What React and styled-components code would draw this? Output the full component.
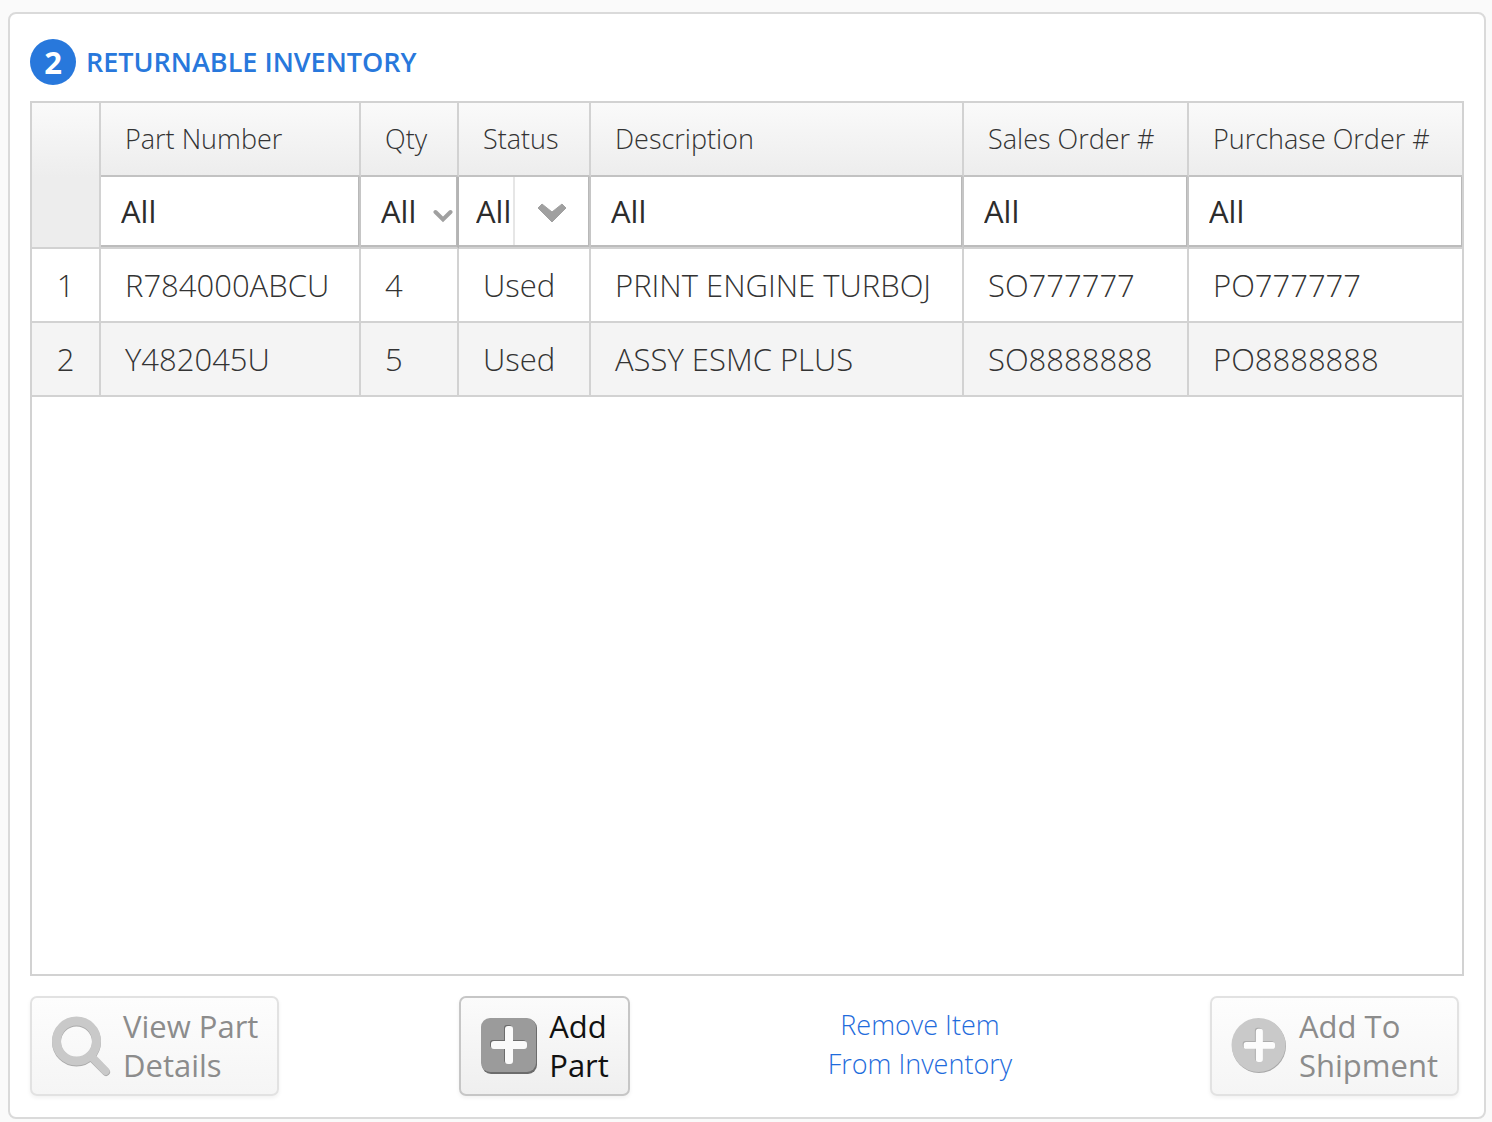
import React from "react";
import styled, { createGlobalStyle, css } from "styled-components";

const line = "#d2d2d2";
const blue = "#2878dc";

const GlobalStyle = createGlobalStyle`
  *, *::before, *::after { box-sizing: border-box; }
  body {
    margin: 0;
    background: #fafafa;
    color: #333;
    font-family: "Open Sans", "Noto Sans", sans-serif;
  }
  button, input, select { font: inherit; color: inherit; }
`;

const Page = styled.main`
  display: flex;
  flex-direction: column;
  min-height: 100vh;
  padding: 12px 6px 3px 8px;
`;

const Panel = styled.section`
  display: flex;
  flex: 1;
  flex-direction: column;
  padding: 25px 20px 21px;
  background: #fff;
  border: 2px solid #dadada;
  border-radius: 8px;
`;

const Heading = styled.header`
  display: flex;
  align-items: center;
  gap: 10px;
  margin-bottom: 16px;
`;

const StepBadge = styled.span`
  display: flex;
  align-items: center;
  justify-content: center;
  width: 46px;
  height: 46px;
  border-radius: 50%;
  background: ${blue};
  color: #fff;
  font-size: 31px;
  font-weight: 700;
  line-height: 46px;
`;

const Title = styled.h2`
  margin: 0;
  color: ${blue};
  font-size: 27px;
  font-weight: 600;
  line-height: 40px;
`;

const GridFrame = styled.div`
  flex: 1;
  border: 2px solid ${line};
`;

const Table = styled.table`
  width: 100%;
  table-layout: fixed;
  border-collapse: separate;
  border-spacing: 0;
  font-size: 31px;
  font-weight: 300;
  line-height: 40px;
`;

const Col = styled.col`
  width: ${(p) => p.$width};
`;

const HeadCell = styled.th`
  height: 74px;
  padding: 0 0 0 24px;
  border-right: 2px solid ${line};
  border-bottom: 2px solid #c2c2c2;
  background: linear-gradient(#fafafa, #ededed);
  font-size: 27px;
  font-weight: 300;
  text-align: left;
  white-space: nowrap;
  &:last-child { border-right: 0; }
`;

const CornerCell = styled.td`
  padding: 0;
  border-right: 2px solid ${line};
  border-bottom: 2px solid ${line};
  background: linear-gradient(#fafafa, #ededed 74px);
`;

const FilterCell = styled.td`
  height: 72px;
  padding: 0;
  border-right: 2px solid ${(p) => (p.$boxed ? "#b4b4b4" : "#c6c6c6")};
  border-bottom: 2px solid ${line};
  &:last-child { border-right: 0; }
`;

const FilterBox = styled.div`
  position: relative;
  height: 70px;
  border-right: 1px solid #b8b8b8;
  border-bottom: 2px solid #bcbcbc;
`;

const control = css`
  display: block;
  width: 100%;
  height: 100%;
  margin: 0;
  padding: 0 0 0 20px;
  border: 0;
  border-radius: 0;
  background: #fff;
  color: #2c2c2c;
  font-size: 31px;
  font-weight: 400;
  appearance: none;
  &:focus-visible { outline: 2px solid ${blue}; outline-offset: -2px; }
`;

const FilterInput = styled.input`${control}`;

const FilterSelect = styled.select`
  ${control}
  padding-left: ${(p) => (p.$divided ? "17px" : "20px")};
`;

const Arrow = styled.span`
  position: absolute;
  top: 0;
  right: 0;
  bottom: 0;
  display: flex;
  align-items: center;
  justify-content: center;
  width: ${(p) => (p.$divided ? "75px" : "26px")};
  padding-top: ${(p) => (p.$divided ? "3px" : "9px")};
  border-left: ${(p) => (p.$divided ? "2px solid #e6e6e6" : "0")};
  pointer-events: none;
`;

const Row = styled.tr`
  background: ${(p) => (p.$shaded ? "#f4f4f4" : "#fff")};
`;

const Cell = styled.td`
  height: 74px;
  padding: ${(p) => (p.$index ? "0" : "0 0 0 24px")};
  border-right: 2px solid ${line};
  border-bottom: 2px solid ${line};
  text-align: ${(p) => (p.$index ? "center" : "left")};
  white-space: nowrap;
  &:last-child { border-right: 0; }
`;

const Actions = styled.footer`
  display: flex;
  align-items: center;
  justify-content: space-between;
  margin-top: 20px;
  padding-right: 5px;
`;

const ActionButton = styled.button`
  display: flex;
  align-items: center;
  gap: 12px;
  height: 100px;
  padding: 0 19px;
  border: 2px solid #c6c6c6;
  border-radius: 7px;
  background: linear-gradient(#fbfbfb, #efefef);
  box-shadow: 0 2px 4px rgba(0, 0, 0, 0.06);
  color: #111;
  font-size: 31px;
  line-height: 39px;
  text-align: left;
  cursor: pointer;
  &:disabled {
    border-color: #e2e2e2;
    background: linear-gradient(#fdfdfd, #f5f5f5);
    color: #8c8c8c;
    cursor: default;
  }
`;

const RemoveLink = styled.a`
  padding: 0 18px 4px;
  color: #1f6cdc;
  font-size: 27px;
  font-weight: 300;
  line-height: 39px;
  text-align: center;
  text-decoration: none;
`;

const SmallChevron = () => (
  <svg width="20" height="14" viewBox="0 0 20 14" aria-hidden="true">
    <path d="M2.5 3 L10 10.5 L17.5 3" fill="none" stroke="#a0a0a0" strokeWidth="4" strokeLinecap="round" />
  </svg>
);

const LargeChevron = () => (
  <svg width="30" height="20" viewBox="0 0 30 20" aria-hidden="true">
    <path d="M1 5 L5 1 L15 9 L25 1 L29 5 L15 19 Z" fill="#a0a0a0" stroke="#a0a0a0" strokeLinejoin="round" />
  </svg>
);

const SearchIcon = () => (
  <svg width="60" height="62" viewBox="0 0 60 62" aria-hidden="true">
    <g transform="translate(0 1)" stroke="#aaa" fill="none">
      <circle cx="25.5" cy="26" r="20" strokeWidth="9" />
      <path d="M42 43 L55 56" strokeWidth="8" strokeLinecap="round" />
    </g>
    <g stroke="#c9c9c9" fill="none">
      <circle cx="25.5" cy="26" r="20" strokeWidth="9" />
      <path d="M41 42 L54.5 56" strokeWidth="8" strokeLinecap="round" />
    </g>
  </svg>
);

const plus =
  "M24 12 q0 -3 3 -3 h2 q3 0 3 3 v12 h11 q3 0 3 3 v2 q0 3 -3 3 h-11 v12 q0 3 -3 3 h-2 q-3 0 -3 -3 v-12 h-11 q-3 0 -3 -3 v-2 q0 -3 3 -3 h11 z";

const SquarePlusIcon = () => (
  <svg width="57" height="58" viewBox="-1 0 57 58" aria-hidden="true">
    <rect x="1" y="2" width="55" height="55" rx="9" fill="#6c6c6c" />
    <rect x="0" y="1" width="55" height="54" rx="9" fill="#9b9b9b" />
    <path d={plus} fill="#6c6c6c" transform="translate(-1 -1)" />
    <path d={plus} fill="#fafafa" />
  </svg>
);

const RoundPlusIcon = () => (
  <svg width="56" height="58" viewBox="0 0 56 58" aria-hidden="true">
    <circle cx="28" cy="29" r="27" fill="#a8a8a8" />
    <circle cx="27.5" cy="28" r="27" fill="#c9c9c9" />
    <path d={plus} fill="#adadad" transform="translate(3 3) scale(.87)" />
    <path d={plus} fill="#fcfcfc" transform="translate(4 4) scale(.87)" />
  </svg>
);

const columns = [
  { key: "part", label: "Part Number", width: "260px" },
  { key: "qty", label: "Qty", width: "98px", filter: "select" },
  { key: "status", label: "Status", width: "132px", filter: "divided" },
  { key: "description", label: "Description", width: "auto" },
  { key: "sales", label: "Sales Order #", width: "225px" },
  { key: "purchase", label: "Purchase Order #", width: "273px" },
];

const rows = [
  { part: "R784000ABCU", qty: "4", status: "Used", description: "PRINT ENGINE TURBOJ", sales: "SO777777", purchase: "PO777777" },
  { part: "Y482045U", qty: "5", status: "Used", description: "ASSY ESMC PLUS", sales: "SO8888888", purchase: "PO8888888" },
];

function Filter({ column }) {
  const name = `Filter by ${column.label}`;
  if (!column.filter) {
    return (
      <FilterBox>
        <FilterInput type="text" aria-label={name} defaultValue="All" />
      </FilterBox>
    );
  }
  const divided = column.filter === "divided";
  const options = [...new Set(rows.map((row) => row[column.key]))];
  return (
    <FilterBox>
      <FilterSelect aria-label={name} defaultValue="All" $divided={divided}>
        <option>All</option>
        {options.map((value) => (
          <option key={value}>{value}</option>
        ))}
      </FilterSelect>
      <Arrow $divided={divided}>{divided ? <LargeChevron /> : <SmallChevron />}</Arrow>
    </FilterBox>
  );
}

export default function App() {
  return (
    <>
      <GlobalStyle />
      <Page>
        <Panel aria-labelledby="inventory-title">
          <Heading>
            <StepBadge>2</StepBadge>
            <Title id="inventory-title">RETURNABLE INVENTORY</Title>
          </Heading>
          <GridFrame>
            <Table aria-labelledby="inventory-title">
              <colgroup>
                <Col $width="69px" />
                {columns.map((c) => (
                  <Col key={c.key} $width={c.width} />
                ))}
              </colgroup>
              <thead>
                <tr>
                  <CornerCell rowSpan={2} />
                  {columns.map((c) => (
                    <HeadCell key={c.key} scope="col">{c.label}</HeadCell>
                  ))}
                </tr>
                <tr>
                  {columns.map((c) => (
                    <FilterCell key={c.key} $boxed={c.filter === "select"}>
                      <Filter column={c} />
                    </FilterCell>
                  ))}
                </tr>
              </thead>
              <tbody>
                {rows.map((row, i) => (
                  <Row key={row.part} $shaded={i % 2 === 1}>
                    <Cell $index>{i + 1}</Cell>
                    {columns.map((c) => (
                      <Cell key={c.key}>{row[c.key]}</Cell>
                    ))}
                  </Row>
                ))}
              </tbody>
            </Table>
          </GridFrame>
          <Actions>
            <ActionButton type="button" disabled>
              <SearchIcon />
              <span>View Part<br />Details</span>
            </ActionButton>
            <ActionButton type="button">
              <SquarePlusIcon />
              <span>Add<br />Part</span>
            </ActionButton>
            <RemoveLink href="#remove">Remove Item<br />From Inventory</RemoveLink>
            <ActionButton type="button" disabled>
              <RoundPlusIcon />
              <span>Add To<br />Shipment</span>
            </ActionButton>
          </Actions>
        </Panel>
      </Page>
    </>
  );
}
